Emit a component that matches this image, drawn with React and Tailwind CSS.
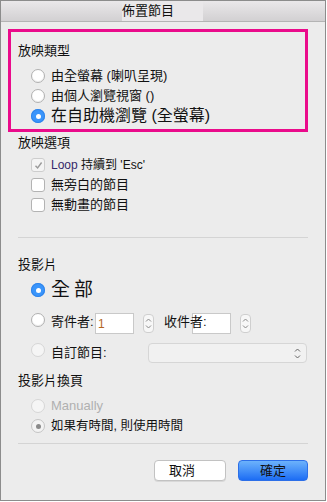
import React from "react";

function Radio({ state = "off" }) {
  if (state === "on") {
    return (
      <span className="flex h-[14px] w-[14px] shrink-0 items-center justify-center rounded-full bg-[#3a95fb] shadow-[inset_0_0_0_1px_#2f84ea]">
        <span className="h-[5px] w-[5px] rounded-full bg-white" />
      </span>
    );
  }
  if (state === "dim-on") {
    return (
      <span className="flex h-[14px] w-[14px] shrink-0 items-center justify-center rounded-full border border-[#c4c4c4] bg-[#f3f3f3]">
        <span className="h-[5px] w-[5px] rounded-full bg-[#8a8a8a]" />
      </span>
    );
  }
  if (state === "dim") {
    return <span className="h-[14px] w-[14px] shrink-0 rounded-full border border-[#d6d6d6] bg-[#f5f5f5]" />;
  }
  return <span className="h-[14px] w-[14px] shrink-0 rounded-full border border-[#b0b0b0] bg-white shadow-[inset_0_-1px_1px_#eeeeee]" />;
}

function Checkbox({ checked }) {
  return (
    <span
      className={
        "flex h-[14px] w-[14px] shrink-0 items-center justify-center rounded-[3px] border " +
        (checked ? "border-[#cdcdcd] bg-[#f4f4f4]" : "border-[#b3b3b3] bg-white")
      }
    >
      {checked && (
        <svg width="9" height="9" viewBox="0 0 9 9">
          <path d="M1.5 4.8 L3.6 7 L7.6 1.5" fill="none" stroke="#9a9a9a" strokeWidth="1.4" />
        </svg>
      )}
    </span>
  );
}

function Chevrons({ color = "#7a7a7a" }) {
  return (
    <svg width="7" height="13" viewBox="0 0 7 13">
      <path d="M1 4.5 L3.5 2 L6 4.5" fill="none" stroke={color} strokeWidth="1" />
      <path d="M1 8.5 L3.5 11 L6 8.5" fill="none" stroke={color} strokeWidth="1" />
    </svg>
  );
}

function Stepper() {
  return (
    <span className="mt-px flex h-[19px] w-[11px] shrink-0 items-center justify-center rounded-[4px] border border-[#cfcfcf] bg-[#f7f7f7]">
      <Chevrons color="#8a8a8a" />
    </span>
  );
}

export default function App() {
  return (
    <div className="h-[502px] w-[327px] bg-white">
      <div className="flex h-[501px] w-[326px] flex-col border border-[#8c8c8c] bg-[#ececec] font-['Liberation_Sans','Noto_Sans_CJK_TC',sans-serif] text-[#111]">
        {/* title bar */}
        <div className="flex h-[21px] shrink-0 border-b border-[#b4b4b4] bg-gradient-to-b from-[#eae8ea] to-[#d2d0d2]">
          <div className="ml-[121px] flex h-full w-[81px] items-center bg-[#eae8ea] text-[13px] leading-4">
            佈置節目
          </div>
        </div>

        <div className="flex flex-col pl-[7px] pt-[7px]">
          {/* 放映類型 */}
          <div className="h-[103px] w-[300px] border-[3px] border-[#ea0b8b] pl-[7px] pt-[11px]">
            <div className="text-[13px] leading-4">放映類型</div>
            <div className="mt-[7px] flex flex-col pl-[13px]">
              <div className="flex h-5 items-center gap-[6px] text-[13px]">
                <Radio />
                <span>由全螢幕 (喇叭呈現)</span>
              </div>
              <div className="flex h-5 items-center gap-[6px] text-[13px]">
                <Radio />
                <span>由個人瀏覽視窗 ()</span>
              </div>
              <div className="flex h-5 items-center gap-[6px] text-[16px]">
                <Radio state="on" />
                <span>在自助機瀏覽 (全螢幕)</span>
              </div>
            </div>
          </div>

          <div className="flex flex-col pl-[10px]">
            {/* 放映選項 */}
            <div className="mt-[3px] text-[13px] leading-4">放映選項</div>
            <div className="mt-[4px] flex flex-col pl-[13px]">
              <div className="flex h-5 items-center gap-[6px] text-[12px]">
                <Checkbox checked />
                <span>
                  <span className="text-[#35286a]">Loop</span> 持續到 'Esc'
                </span>
              </div>
              <div className="flex h-5 items-center gap-[6px] text-[13px]">
                <Checkbox />
                <span>無旁白的節目</span>
              </div>
              <div className="flex h-5 items-center gap-[6px] text-[13px]">
                <Checkbox />
                <span>無動畫的節目</span>
              </div>
            </div>

            <div className="mt-[22px] h-px w-[290px] bg-[#d4d4d4]" />

            {/* 投影片 */}
            <div className="mt-[19px] text-[13px] leading-4">投影片</div>
            <div className="mt-[7px] flex flex-col pl-[13px]">
              <div className="flex h-5 items-center gap-[6px]">
                <Radio state="on" />
                <span className="text-[19px] leading-5 tracking-[4px]">全部</span>
              </div>

              <div className="mt-[13px] flex h-[21px] items-start">
                <Radio />
                <span className="ml-[6px] mt-[1px] w-[44px] whitespace-nowrap text-[13px] leading-4">寄件者:</span>
                <span className="flex h-[21px] w-[39px] shrink-0 items-end border border-[#c9c9c9] bg-white pb-[1px] pl-[2px] text-[12px] leading-4 text-[#b3661f]">
                  1
                </span>
                <span className="ml-[9px]">
                  <Stepper />
                </span>
                <span className="relative z-10 ml-[10px] mt-[1px] w-[28px] whitespace-nowrap text-[13px] leading-4">
                  收件者:
                </span>
                <span className="h-[21px] w-[39px] shrink-0 border border-[#c9c9c9] bg-white" />
                <span className="ml-[9px]">
                  <Stepper />
                </span>
              </div>

              <div className="mt-[9px] flex h-5 items-start">
                <Radio state="dim" />
                <span className="ml-[6px] mt-[2px] w-[97px] whitespace-nowrap text-[13px] leading-4">自訂節目:</span>
                <span className="flex h-5 w-[159px] items-center justify-end rounded-[4px] border border-[#d6d6d6] bg-[#f1f1f1] pr-[5px]">
                  <Chevrons color="#666" />
                </span>
              </div>
            </div>

            {/* 投影片換頁 */}
            <div className="mt-[10px] text-[13px] leading-4">投影片換頁</div>
            <div className="mt-[7px] flex flex-col pl-[13px]">
              <div className="flex h-5 items-center gap-[6px] text-[13px] text-[#b0b0b0]">
                <Radio state="dim" />
                <span>Manually</span>
              </div>
              <div className="flex h-5 items-center gap-[6px] text-[12.5px]">
                <Radio state="dim-on" />
                <span>如果有時間, 則使用時間</span>
              </div>
            </div>

            <div className="mt-[7px] h-px w-[290px] bg-[#d4d4d4]" />

            <div className="mt-[16px] flex w-[290px] justify-end gap-[12px]">
              <button className="h-[21px] w-[72px] rounded-[4px] border border-[#c2c2c2] bg-white pr-[16px] text-[13px] leading-4 shadow-[0_1px_0_#d8d8d8]">
                取消
              </button>
              <button className="h-[21px] w-[70px] rounded-[4px] border border-[#2c6fe8] bg-gradient-to-b from-[#6cb2fb] to-[#1c6cf4] text-[13px] leading-4 text-[#111]">
                確定
              </button>
            </div>
          </div>
        </div>
      </div>
    </div>
  );
}
